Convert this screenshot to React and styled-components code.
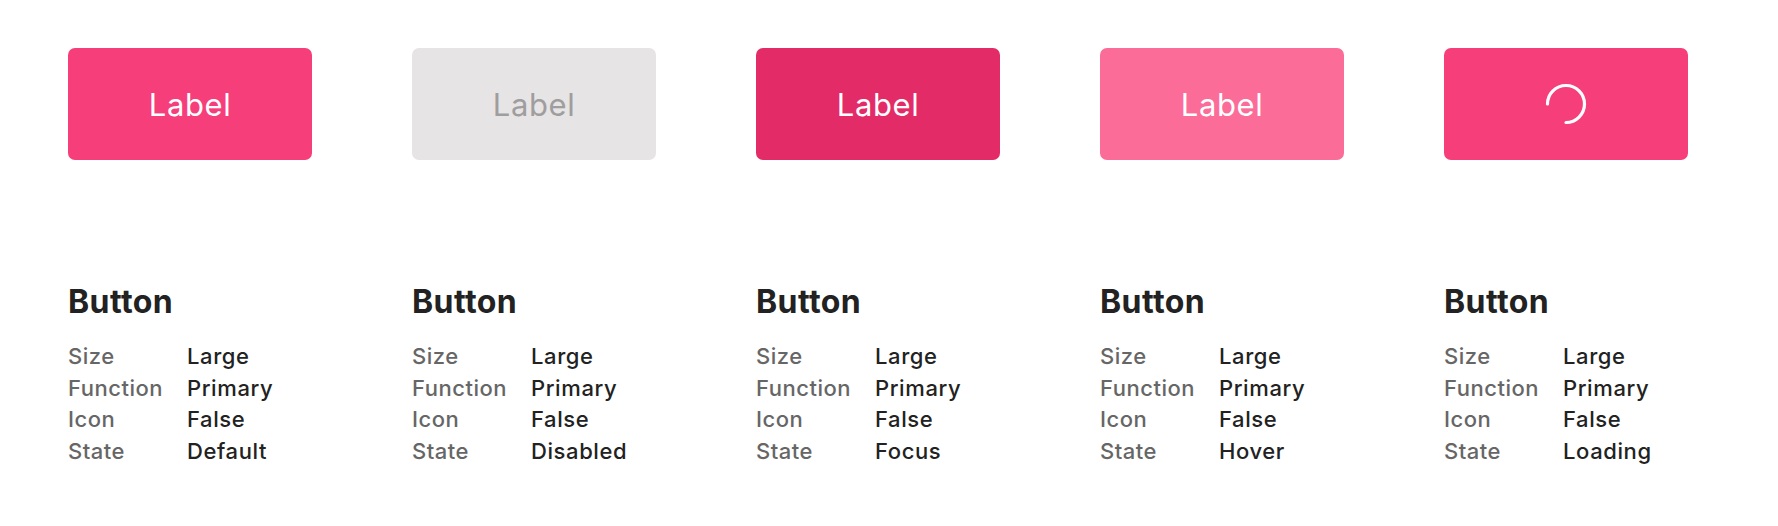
import React from "react";
import styled, { createGlobalStyle } from "styled-components";

const GlobalStyle = createGlobalStyle`
  html, body {
    margin: 0;
    padding: 0;
    background: #fff;
  }
  body {
    font-family: Inter, "Noto Sans", sans-serif;
    -webkit-font-smoothing: antialiased;
  }
`;

const Page = styled.div`
  display: flex;
  gap: 100px;
  padding: 48px 0 0 68px;
`;

const Column = styled.div`
  display: flex;
  flex-direction: column;
  width: 244px;
`;

const variants = {
  default: { bg: "#f63e7b", fg: "#fff" },
  disabled: { bg: "#e6e4e5", fg: "#9f9d9e" },
  focus: { bg: "#e22b67", fg: "#fff" },
  hover: { bg: "#fb6c98", fg: "#fff" },
  loading: { bg: "#f63e7b", fg: "#fff" },
};

const Button = styled.button`
  display: flex;
  align-items: center;
  justify-content: center;
  width: 244px;
  height: 112px;
  border: 0;
  border-radius: 7px;
  padding: 0;
  background: ${(p) => variants[p.$variant].bg};
  color: ${(p) => variants[p.$variant].fg};
  font-family: Inter, "Noto Sans", sans-serif;
  font-size: 31px;
  font-weight: 400;
  letter-spacing: 0.6px;
  cursor: ${(p) => (p.$variant === "disabled" ? "default" : "pointer")};
`;

const Info = styled.div`
  margin-top: 123px;
  display: flex;
  flex-direction: column;
`;

const Title = styled.h2`
  margin: 0 0 20px;
  font-size: 32px;
  line-height: 38px;
  font-weight: 700;
  letter-spacing: 0.4px;
  color: #222;
`;

const Props = styled.dl`
  display: grid;
  grid-template-columns: 119px auto;
  margin: 0;
  font-size: 22px;
  line-height: 31.7px;
  font-weight: 500;
`;

const Key = styled.dt`
  color: #666;
  letter-spacing: 0.5px;
`;

const Value = styled.dd`
  margin: 0;
  color: #222;
  letter-spacing: 0.6px;
`;

function Spinner() {
  return (
    <svg width="42" height="42" viewBox="0 0 42 42" fill="none">
      <path
        d="M2.5 21 A18.5 18.5 0 1 1 21 39.5"
        stroke="#fff"
        strokeWidth="3.2"
        strokeLinecap="round"
      />
    </svg>
  );
}

const items = [
  { variant: "default", state: "Default" },
  { variant: "disabled", state: "Disabled" },
  { variant: "focus", state: "Focus" },
  { variant: "hover", state: "Hover" },
  { variant: "loading", state: "Loading" },
];

export default function App() {
  return (
    <>
      <GlobalStyle />
      <Page>
        {items.map((item) => (
          <Column key={item.state}>
            <Button $variant={item.variant} disabled={item.variant === "disabled"}>
              {item.variant === "loading" ? <Spinner /> : "Label"}
            </Button>
            <Info>
              <Title>Button</Title>
              <Props>
                <Key>Size</Key>
                <Value>Large</Value>
                <Key>Function</Key>
                <Value>Primary</Value>
                <Key>Icon</Key>
                <Value>False</Value>
                <Key>State</Key>
                <Value>{item.state}</Value>
              </Props>
            </Info>
          </Column>
        ))}
      </Page>
    </>
  );
}
